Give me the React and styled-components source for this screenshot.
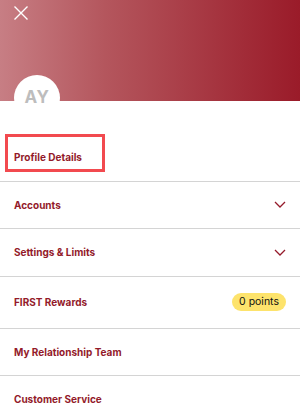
import React from 'react';
import styled, { createGlobalStyle } from 'styled-components';

const GlobalStyle = createGlobalStyle`
    body {
        margin: 0;
        font-family: Inter, "Noto Sans", sans-serif;
        background: #fff;
    }
`

const Page = styled.div`
    width: 300px;
    height: 415px;
    overflow: hidden;
    background: #fff;
`

const Header = styled.div`
    position: relative;
    height: 101px;
    padding: 5px 0 0 13px;
    box-sizing: border-box;
    background: linear-gradient(to right, #c77e84 0%, #b4565d 35%, #9a1b29 100%);
`

const CloseButton = styled.button`
    display: block;
    margin: 0;
    padding: 0;
    width: 16px;
    height: 16px;
    border: none;
    background: none;

    svg {
        display: block;
    }
`

const Avatar = styled.div`
    position: absolute;
    left: 14px;
    top: 75px;
    width: 46px;
    height: 46px;
    border-radius: 50%;
    background: #fff;
    display: flex;
    justify-content: center;
    padding-top: 12px;
    box-sizing: border-box;
    color: #bdbdbd;
    font-weight: 700;
    font-size: 17px;
    letter-spacing: 0.5px;
`

const Menu = styled.ul`
    list-style: none;
    margin: 0;
    padding: 33px 0 0;
`

const Row = styled.li`
    height: ${props => props.tall ? 51 : 46.5}px;
    padding: 0 14px;
    display: flex;
    align-items: center;
    justify-content: space-between;
    border-bottom: ${props => props.last ? 'none' : '1.5px solid #d4d4d4'};
`

const Label = styled.span`
    position: relative;
    color: #931a2a;
    font-size: 10px;
    font-weight: 700;

    ${props => props.highlighted && `
        &::before {
            content: "";
            position: absolute;
            left: -9px;
            top: -17px;
            width: 100px;
            height: 38px;
            border: 3px solid #f24a4f;
            box-sizing: border-box;
        }
    `}
`

const Badge = styled.span`
    background: #fde36c;
    color: #111;
    font-size: 10.5px;
    border-radius: 9px;
    padding: 3px 7px;
    line-height: 12px;
`

const Chevron = () => (
    <svg width="12" height="7" viewBox="0 0 12 7" fill="none">
        <path d="M1 1 L6 6 L11 1" stroke="#951b2b" strokeWidth="1.3" />
    </svg>
)

const items = [
    { label: 'Profile Details', highlighted: true },
    { label: 'Accounts', chevron: true },
    { label: 'Settings & Limits', chevron: true },
    { label: 'FIRST Rewards', badge: '0 points' },
    { label: 'My Relationship Team' },
    { label: 'Customer Service' },
]

const App = () => {
    return (
        <>
            <GlobalStyle />
            <Page>
                <Header>
                    <CloseButton aria-label="Close">
                        <svg width="16" height="16" viewBox="0 0 16 16">
                            <path d="M1.5 1.5 L14.5 14.5 M14.5 1.5 L1.5 14.5" stroke="#fff" strokeWidth="1.4" />
                        </svg>
                    </CloseButton>
                    <Avatar>AY</Avatar>
                </Header>
                <Menu>
                    {items.map((item, i) => (
                        <Row key={item.label} tall={item.badge} last={i === items.length - 1}>
                            <Label highlighted={item.highlighted}>{item.label}</Label>
                            {item.chevron ? <Chevron /> : ""}
                            {item.badge ? <Badge>{item.badge}</Badge> : ""}
                        </Row>
                    ))}
                </Menu>
            </Page>
        </>
    );
}

export default App;
